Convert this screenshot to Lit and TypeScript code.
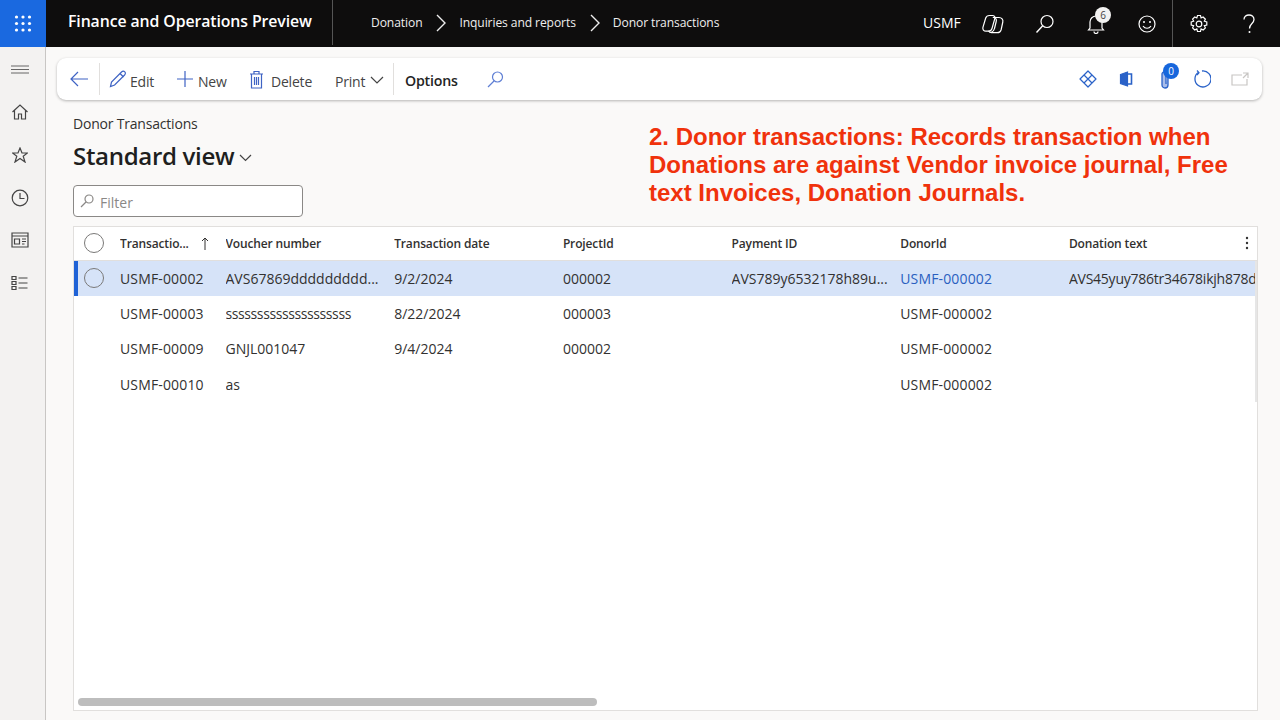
import { LitElement, html, css, svg } from "lit";
import { customElement } from "lit/decorators.js";

const columns = ["Transactio...", "Voucher number", "Transaction date", "ProjectId", "Payment ID", "DonorId", "Donation text"];
const rows = [
  ["USMF-00002", "AVS67869ddddddddd...", "9/2/2024", "000002", "AVS789y6532178h89u...", "USMF-000002", "AVS45yuy786tr34678ikjh878dfgh"],
  ["USMF-00003", "ssssssssssssssssssss", "8/22/2024", "000003", "", "USMF-000002", ""],
  ["USMF-00009", "GNJL001047", "9/4/2024", "000002", "", "USMF-000002", ""],
  ["USMF-00010", "as", "", "", "", "USMF-000002", ""],
];

const ic = (w: number, h: number, body: unknown, cls = "") =>
  html`<svg class=${cls} width=${w} height=${h} viewBox="0 0 ${w} ${h}" fill="none" stroke="currentColor" stroke-width="1.2">${body}</svg>`;

const cellClass = (text: string, ri: number, i: number) => {
  const c: string[] = [];
  if (/^USMF/.test(text)) c.push("id");
  if (/^s+$/.test(text)) c.push("ss");
  if (/^AVS45/.test(text)) c.push("long");
  if (ri === 0 && i === 5) c.push("link");
  return c.join(" ");
};

@customElement("app-root")
export class AppRoot extends LitElement {
  static styles = css`
    :host { display: block; width: 1280px; height: 720px; overflow: hidden; font-family: "Open Sans", "Noto Sans", sans-serif; color: #323130; background: #faf9f8; }
    * { box-sizing: border-box; }
    svg { display: block; flex: none; }
    .top { height: 47px; background: #0e0d0d; color: #fff; display: flex; align-items: center; }
    .waffle { width: 46px; height: 47px; background: #1a69e0; display: grid; place-items: center; }
    .title { width: 287px; height: 45px; padding: 0 0 3px 22px; display: flex; align-items: center; font-size: 15.85px; font-weight: 600; border-right: 1px solid #555; letter-spacing: -0.1px; margin-bottom: 2px; }
    .crumbs { display: flex; align-items: center; padding: 0 0 2px 38px; font-size: 12.1px; color: #eee; flex: 1; letter-spacing: -0.1px; }
    .crumbs svg { margin: 0 13px 0 14px; }
    .usmf { font-size: 14px; width: 50px; margin: 0 0 2px -1px; }
    .ticons { display: flex; align-items: center; height: 47px; padding-right: 6px; }
    .ti { display: grid; place-items: center; position: relative; height: 47px; }
    .vsep { width: 1px; height: 47px; background: #555; }
    .bell-badge { position: absolute; left: 18px; top: 7px; width: 16px; height: 16px; border-radius: 50%; background: #f3f2f1; color: #444; font-size: 10px; display: grid; place-items: center; }

    .body { display: flex; height: 673px; }
    .nav { width: 46px; background: #f3f2f1; border-right: 1px solid #c8c6c4; display: flex; flex-direction: column; align-items: center; padding: 17px 6px 0 0; color: #444; }
    .nav div { height: 42.7px; display: grid; place-items: center; }
    .nav div.menu { height: 11px; margin-bottom: 16px; color: #666; }
    .main { flex: 1; padding: 11px 18px 9px 11px; display: flex; flex-direction: column; min-width: 0; }
    .toolbar { height: 42px; background: #fff; border-radius: 9px; box-shadow: 0 1px 3px rgba(0,0,0,.28); display: flex; align-items: center; color: #444; font-size: 14px; }
    .tool { display: flex; align-items: center; gap: 3px; white-space: nowrap; letter-spacing: -0.2px; }
    .tool span { padding-top: 4px; }
    .tool svg { color: #3f63c4; }
    .tool.print svg { color: #444; margin-top: 2px; }
    .tsep { width: 1px; height: 32px; background: #e1dfdd; }
    .options { font-weight: 600; color: #242424; font-size: 14.2px; letter-spacing: -0.2px; padding-top: 2px; }
    .find { color: #5f7fd4; }
    .tright { margin-left: auto; display: flex; align-items: center; position: relative; color: #2a62c8; }
    .clip { position: relative; }
    .clip-badge { position: absolute; left: 3px; top: -7px; width: 16px; height: 16px; border-radius: 50%; background: #1766dc; color: #fff; font-size: 10px; display: grid; place-items: center; }
    .share { color: #c8c6c4; }

    .head { display: flex; height: 126px; padding-left: 16px; }
    .head-left { width: 576px; }
    .crumb { font-size: 14px; margin-top: 14px; line-height: 19px; letter-spacing: -0.2px; }
    .view { display: flex; align-items: center; font-size: 24.1px; font-weight: 600; color: #201f1e; margin-top: 4px; height: 36px; letter-spacing: -0.35px; }
    .view svg { margin: 6px 0 0 5px; color: #444; }
    .filter { width: 230px; height: 32px; margin-top: 12px; background: #fff; border: 1px solid #8a8886; border-radius: 4px; display: flex; align-items: center; padding-left: 6px; gap: 6px; color: #8a8886; font-size: 14px; }
    .filter span { padding-top: 2px; }
    .note { font-family: "Liberation Sans", Arial, sans-serif; font-weight: 700; color: #f0320c; font-size: 24px; line-height: 28px; margin-top: 23px; white-space: nowrap; }

    .table { flex: 1; width: 1185px; background: #fff; border: 1px solid #e1dfdd; position: relative; overflow: hidden; margin-left: 16px; }
    .row { display: grid; grid-template-columns: 46px 105.5px 168.7px 168.7px 168.7px 168.7px 168.7px 1fr; align-items: center; font-size: 14px; height: 35.3px; }
    .row > div { white-space: nowrap; overflow: hidden; }
    .hdr { height: 33.7px; font-weight: 600; font-size: 12px; color: #323130; border-bottom: 1px solid #e1dfdd; letter-spacing: -0.14px; }
    .sel { background: #d6e3f8; position: relative; }
    .sel::before { content: ""; position: absolute; left: 0; top: 0; bottom: 0; width: 4px; background: #1f62d6; }
    .id { letter-spacing: 0.15px; }
    .ss { letter-spacing: -0.4px; }
    .long { letter-spacing: -0.24px; }
    .link { color: #2a5fc0; }
    .radio { width: 20px; height: 20px; border-radius: 50%; border: 1px solid #7a7978; margin-left: 10px; }
    .sorted { display: flex; align-items: center; gap: 12px; }
    .more { position: absolute; right: 8px; top: 9px; color: #333; }
    .vscroll { position: absolute; right: 0; top: 34px; width: 2px; height: 141px; background: #e6e6e6; }
    .hscroll { position: absolute; left: 4px; bottom: 4px; width: 519px; height: 8px; border-radius: 4px; background: #bdbdbd; }
  `;

  private topbar() {
    return html`<div class="top">
      <div class="waffle">${ic(18, 18, svg`<g fill="#fff" stroke="none">${[2, 8.5, 15].flatMap((y) => [2.5, 9, 15.5].map((x) => svg`<circle cx=${x} cy=${y} r="1.6"/>`))}</g>`)}</div>
      <div class="title">Finance and Operations Preview</div>
      <div class="crumbs">
        <span>Donation</span>${ic(10, 18, svg`<path d="M1 1l8 8-8 8" stroke-width="1.4"/>`)}
        <span>Inquiries and reports</span>${ic(10, 18, svg`<path d="M1 1l8 8-8 8" stroke-width="1.4"/>`)}
        <span>Donor transactions</span>
      </div>
      <div class="usmf">USMF</div>
      <div class="ticons">
        <div class="ti" style="width:40px">${ic(22, 20, svg`<path d="M7.500 1.500h3c1.800 0 2.800 1.400 2.300 3.200L10 14.500c-.5 1.700-1.800 2.700-3.500 2.700H4c-2.300 0-3.600-1.700-3-4L3.700 4c.5-1.600 2.200-2.500 3.800-2.500z"/><path d="M10.800 3.500H17c2.700 0 4.400 2 3.800 4.500l-1.600 7.500c-.5 2-2.200 3.200-4 3.200H9.500c-1.700 0-2.600-1.100-3-2"/><path d="M12 3.500c1.800.5 2.700 2 2.200 4l-1.700 7c-.3 1.500-1.300 3-3 3.500"/>`)}</div>
        <div class="ti" style="width:64px">${ic(20, 20, svg`<circle cx="12" cy="7.500" r="6"/><path d="M7.700 11.800L1.500 18.500" stroke-width="1.400"/>`)}</div>
        <div class="ti" style="width:37px">${ic(18, 20, svg`<path d="M3 14V8a6 6 0 0 1 12 0v6l1.500 2h-15z"/><path d="M7 17.500a2 2 0 0 0 4 0"/>`)}<span class="bell-badge">6</span></div>
        <div class="ti" style="width:58px;padding-left:7px">${ic(20, 20, svg`<circle cx="10" cy="10" r="8"/><circle cx="7" cy="8" r="1" fill="currentColor" stroke="none"/><circle cx="13" cy="8" r="1" fill="currentColor" stroke="none"/><path d="M6 12c2 3 6 3 8 0"/>`)}</div>
        <div class="vsep"></div>
        <div class="ti" style="width:51px">${ic(20, 20, svg`<circle cx="10" cy="10" r="2.800"/><path d="M8.500 1.500h3l.6 2.500 2-1 2.300 2.200-1.100 2 2.500.8v3l-2.500.7 1.100 2.100-2.200 2.200-2.100-1.100-.6 2.600h-3l-.7-2.600-2.100 1.100-2.100-2.200 1-2.100-2.400-.7v-3l2.500-.8-1.100-2L5.700 3l2.100 1z"/>`)}</div>
        <div class="ti" style="width:50px">${ic(14, 20, svg`<path d="M2 5.500c0-6 10-6 10 0 0 4-4.500 4-4.500 9" stroke-width="1.300"/><circle cx="7.500" cy="18" r="1" fill="currentColor" stroke="none"/>`)}</div>
      </div>
    </div>`;
  }

  private toolbar() {
    return html`<div class="toolbar">
      <div class="tool" style="width:41px;justify-content:center;margin-left:1px">${ic(18, 16, svg`<path d="M18 8H1M8 1L1 8l7 7"/>`)}</div>
      <div class="tsep"></div>
      <div class="tool" style="margin-left:9px;width:67px">${ic(18, 18, svg`<path d="M1.500 16.500l1-4.500L12.500 2c1-1 2.500-1 3.300-.2s.8 2.200-.2 3.200L5.600 15z"/><path d="M11 3.500l3.500 3.500"/>`)}<span>Edit</span></div>
      <div class="tool" style="width:73px;gap:4px">${ic(18, 18, svg`<path d="M9 1v16M1 9h16"/>`)}<span>New</span></div>
      <div class="tool" style="width:86px;gap:7px">${ic(15, 19, svg`<path d="M1 4h13M5 4V1.500h5V4M2.500 4v14h10V4M5.500 7v8M7.500 7v8M9.500 7v8"/>`)}<span>Delete</span></div>
      <div class="tool print" style="width:58px;gap:5px"><span>Print</span>${ic(14, 8, svg`<path d="M1 1l6 6 6-6"/>`)}</div>
      <div class="tsep"></div>
      <div class="options" style="margin-left:11px;width:82px">Options</div>
      <div class="find">${ic(17, 17, svg`<circle cx="10.500" cy="6" r="5"/><path d="M7 10L1 16"/>`)}</div>
      <div class="tright">
        <div style="width:40px">${ic(18, 18, svg`<path d="M9 1l8 8-8 8-8-8zM5 5l8 8M13 5l-8 8" stroke-linejoin="round"/>`)}</div>
        <div style="width:41px">${ic(14, 16, svg`<path d="M1.500 3.500L8.500 1v14l-7-2.500z" fill="currentColor"/><path d="M8.500 3h4v10h-4" stroke-width="1.600"/>`)}</div>
        <div class="clip" style="width:33px">${ic(10, 19, svg`<path d="M8 5v10a3 3 0 0 1-6 0V4a2 2 0 0 1 4 0v10" stroke-width="1.300" fill="#a9bdea"/>`)}<span class="clip-badge">0</span></div>
        <div style="width:38px">${ic(18, 18, svg`<path d="M5.500 2.300A8 8 0 1 0 9 1" stroke-width="1.300"/><path d="M4 .500l2 2.200-2 2.300"/>`)}</div>
        <div class="share" style="width:31px">${ic(18, 14, svg`<path d="M16 7v6H1V3h10M12 1h5v5M17 1l-5 5"/>`)}</div>
      </div>
    </div>`;
  }

  render() {
    return html`
      ${this.topbar()}
      <div class="body">
        <div class="nav">
          <div class="menu">${ic(18, 9, svg`<path d="M0 1h18M0 4.500h18M0 8h18" stroke-width="1"/>`)}</div>
          <div>${ic(16, 16, svg`<path d="M.5 8L8 1l7.500 7M2.500 6.500V15h4v-5h3v5h4V6.500"/>`)}</div>
          <div>${ic(16, 16, svg`<path d="M8 1l2 5h5.500l-4.300 3.300L13 15 8 11.500 3 15l1.800-5.700L.5 6H6z"/>`)}</div>
          <div>${ic(18, 18, svg`<circle cx="9" cy="9" r="7.800"/><path d="M9 4v5.500h4.500"/>`)}</div>
          <div>${ic(18, 16, svg`<path d="M1 1h16v14H1zM1 4h16M3.500 7h5v5h-5zM11 7h4M11 9.500h4M11 12h2.500"/>`)}</div>
          <div>${ic(17, 16, svg`<path d="M1 1.500h4v3H1zM1 6.500h4v3H1zM1 11.500h4v3H1zM7.500 3h9M7.500 8h9M7.500 13h9"/>`)}</div>
        </div>
        <div class="main">
          ${this.toolbar()}
          <div class="head">
            <div class="head-left">
              <div class="crumb">Donor Transactions</div>
              <div class="view">Standard view${ic(13, 8, svg`<path d="M1 1l5.500 5.500L12 1"/>`)}</div>
              <div class="filter">${ic(14, 14, svg`<circle cx="9" cy="5" r="4"/><path d="M6 8l-5 5"/>`)}<span>Filter</span></div>
            </div>
            <div class="note">2. Donor transactions: Records transaction when<br />Donations are against Vendor invoice journal, Free<br />text Invoices, Donation Journals.</div>
          </div>
          <div class="table">
            <div class="row hdr">
              <div style="overflow:visible"><div class="radio"></div></div>
              ${columns.map((c, i) =>
                i === 0
                  ? html`<div class="sorted"><span>${c}</span>${ic(8, 13, svg`<path d="M4 13V1M1 4l3-3 3 3" stroke-width="1"/>`)}</div>`
                  : html`<div>${c}</div>`
              )}
            </div>
            ${rows.map(
              (r, ri) => html`<div class="row ${ri === 0 ? "sel" : ""}">
                <div>${ri === 0 ? html`<div class="radio"></div>` : ""}</div>
                ${r.map((c, i) => html`<div class=${cellClass(c, ri, i)}>${c}</div>`)}
              </div>`
            )}
            <div class="more">${ic(4, 14, svg`<g fill="currentColor" stroke="none"><circle cx="2" cy="2" r="1.200"/><circle cx="2" cy="7" r="1.200"/><circle cx="2" cy="12" r="1.200"/></g>`)}</div>
            <div class="vscroll"></div>
            <div class="hscroll"></div>
          </div>
        </div>
      </div>
    `;
  }
}
